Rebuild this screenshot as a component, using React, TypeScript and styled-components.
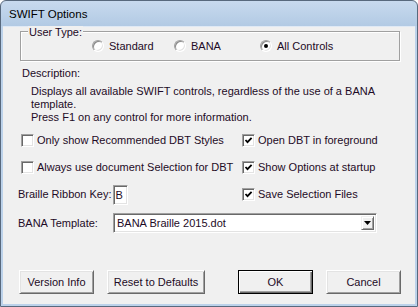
import React from "react";
import styled, { createGlobalStyle } from "styled-components";

const GlobalStyle = createGlobalStyle`
  html, body {
    margin: 0;
    padding: 0;
    background: #ffffff;
  }
  body {
    font-family: "Liberation Sans", Arial, sans-serif;
    font-size: 11px;
    color: #1e0b26;
  }
`;

const Window = styled.div`
  width: 418px;
  height: 307px;
  box-sizing: border-box;
  border: 1px solid #58697d;
  border-radius: 6px 6px 0 0;
  background: linear-gradient(#c8daee, #b2cae4 25px, #bcd2ea 25px);
  padding: 0 2px 2px 2px;
  display: flex;
  flex-direction: column;
  overflow: hidden;
`;

const TitleBar = styled.div`
  height: 25px;
  flex: none;
  display: flex;
  align-items: center;
  padding-left: 6px;
  font-size: 11.5px;
  color: #000;
`;

const Client = styled.div`
  flex: 1;
  background: #f0f0f0;
  border-top: 1px solid #dfe9f5;
  display: flex;
  flex-direction: column;
  padding: 0 14px 10px 0;
`;

const Group = styled.div`
  position: relative;
  box-sizing: border-box;
  margin: 4px 0 0 17px;
  width: 380px;
  height: 30px;
  border: 1px solid #a0a0a0;
  box-shadow: inset 1px 1px #ffffff, 1px 1px #ffffff;
  display: grid;
  grid-template-columns: 82px 86px auto;
  align-items: center;
  padding-left: 71px;
`;

const Legend = styled.span`
  position: absolute;
  top: -6px;
  left: 7px;
  padding: 0 1px;
  line-height: 13px;
  background: #f0f0f0;
`;

const RadioItem = styled.label`
  display: flex;
  align-items: center;
  gap: 5px;
  line-height: 13px;
`;

const RadioDot = styled.span<{ $checked?: boolean }>`
  position: relative;
  box-sizing: border-box;
  width: 12px;
  height: 12px;
  border-radius: 50%;
  border: 1px solid;
  border-color: #a0a0a0 #ffffff #ffffff #a0a0a0;
  background: #ffffff;
  box-shadow: inset 1px 1px #8a8a8a, inset -1px -1px #e3e3e3;
  &::after {
    content: "";
    display: ${(p) => (p.$checked ? "block" : "none")};
    position: absolute;
    left: 3px;
    top: 3px;
    width: 4px;
    height: 4px;
    border-radius: 50%;
    background: #000;
  }
`;

const Caption = styled.div`
  margin: 6px 0 0 19px;
  line-height: 13px;
`;

const Description = styled.div`
  margin: 5px 0 0 28px;
  line-height: 13px;
  white-space: nowrap;
`;

const OptionGrid = styled.div`
  margin: 3px 0 0 15px;
  display: grid;
  grid-template-columns: 224px 1fr;
  grid-template-rows: 27px 27px 27px 30px;
  align-items: center;
`;

const CheckItem = styled.label<{ $indent?: number }>`
  display: flex;
  align-items: center;
  gap: 3px;
  padding-left: ${(p) => p.$indent ?? 3}px;
  line-height: 13px;
  white-space: nowrap;
`;

const Sunken = styled.span`
  box-sizing: border-box;
  border: 1px solid;
  border-color: #a0a0a0 #ffffff #ffffff #a0a0a0;
  box-shadow: inset 1px 1px #696969, inset -1px -1px #e3e3e3;
  background: #ffffff;
`;

const Box = styled(Sunken)`
  width: 13px;
  height: 13px;
  display: flex;
  align-items: center;
  justify-content: center;
`;

const Field = styled.div`
  display: flex;
  align-items: center;
  white-space: nowrap;
`;

const FieldLabel = styled.span<{ $width?: number }>`
  width: ${(p) => (p.$width ? `${p.$width}px` : "auto")};
  line-height: 13px;
`;

const KeyInput = styled(Sunken)`
  width: 15px;
  height: 20px;
  margin-left: 1px;
  display: flex;
  align-items: center;
  padding-left: 2px;
`;

const TemplateRow = styled(Field)`
  grid-column: 1 / 3;
`;

const Combo = styled(Sunken)`
  width: 264px;
  height: 20px;
  display: flex;
  align-items: stretch;
  padding: 2px;
`;

const ComboText = styled.span`
  flex: 1;
  display: flex;
  align-items: center;
  padding-left: 1px;
`;

const ComboButton = styled.span`
  box-sizing: border-box;
  width: 13px;
  background: #f0f0f0;
  border: 1px solid;
  border-color: #f0f0f0 #696969 #696969 #f0f0f0;
  box-shadow: inset 1px 1px #ffffff, inset -1px -1px #a0a0a0;
  display: flex;
  align-items: center;
  justify-content: center;
`;

const ButtonRow = styled.div`
  margin-top: auto;
  padding-left: 16px;
  display: flex;
  justify-content: space-between;
`;

const ButtonGroup = styled.div`
  display: flex;
  gap: 13px;
`;

const Button = styled.button<{ $width: number; $default?: boolean }>`
  box-sizing: border-box;
  width: ${(p) => p.$width}px;
  height: 24px;
  padding: 0;
  font-family: "Liberation Sans", Arial, sans-serif;
  font-size: 11px;
  color: #1e0b26;
  background: #f0f0f0;
  border: 1px solid;
  border-color: ${(p) =>
    p.$default ? "#000000" : "#ffffff #696969 #696969 #ffffff"};
  box-shadow: ${(p) =>
    p.$default
      ? "inset 1px 1px #ffffff, inset -1px -1px #696969, inset -2px -2px #a0a0a0"
      : "inset 1px 1px #e3e3e3, inset -1px -1px #a0a0a0"};
`;

const Check = () => (
  <svg width="9" height="9" viewBox="0 0 9 9">
    <path d="M1.5 4 L3.5 6.2 L7.6 1.8" fill="none" stroke="#000" strokeWidth="1.8" />
  </svg>
);

const Arrow = () => (
  <svg width="7" height="4" viewBox="0 0 7 4">
    <path d="M0 0 H7 L3.5 4 Z" fill="#000" />
  </svg>
);

const Checkbox: React.FC<{ checked?: boolean; label: string; indent?: number }> = ({
  checked,
  label,
  indent,
}) => (
  <CheckItem $indent={indent}>
    <Box>{checked && <Check />}</Box>
    {label}
  </CheckItem>
);

export default function App() {
  return (
    <>
      <GlobalStyle />
      <Window>
        <TitleBar>SWIFT Options</TitleBar>
        <Client>
          <Group>
            <Legend>User Type:</Legend>
            <RadioItem>
              <RadioDot />
              Standard
            </RadioItem>
            <RadioItem>
              <RadioDot />
              BANA
            </RadioItem>
            <RadioItem>
              <RadioDot $checked />
              All Controls
            </RadioItem>
          </Group>
          <Caption>Description:</Caption>
          <Description>
            Displays all available SWIFT controls, regardless of the use of a BANA
            <br />
            template.
            <br />
            Press F1 on any control for more information.
          </Description>
          <OptionGrid>
            <Checkbox label="Only show Recommended DBT Styles" />
            <Checkbox checked label="Open DBT in foreground" indent={0} />
            <Checkbox label="Always use document Selection for DBT" />
            <Checkbox checked label="Show Options at startup" indent={0} />
            <Field>
              <FieldLabel>Braille Ribbon Key:</FieldLabel>
              <KeyInput>B</KeyInput>
            </Field>
            <Checkbox checked label="Save Selection Files" indent={0} />
            <TemplateRow>
              <FieldLabel $width={95}>BANA Template:</FieldLabel>
              <Combo>
                <ComboText>BANA Braille 2015.dot</ComboText>
                <ComboButton>
                  <Arrow />
                </ComboButton>
              </Combo>
            </TemplateRow>
          </OptionGrid>
          <ButtonRow>
            <ButtonGroup>
              <Button $width={75}>Version Info</Button>
              <Button $width={98}>Reset to Defaults</Button>
            </ButtonGroup>
            <ButtonGroup>
              <Button $width={75} $default>
                OK
              </Button>
              <Button $width={75}>Cancel</Button>
            </ButtonGroup>
          </ButtonRow>
        </Client>
      </Window>
    </>
  );
}
